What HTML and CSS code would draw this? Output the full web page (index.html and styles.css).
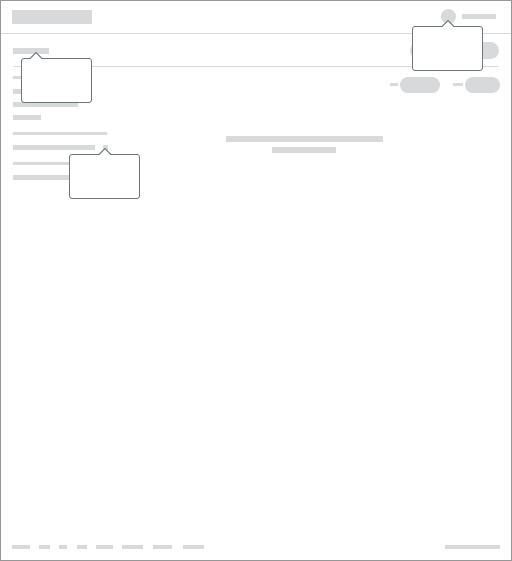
FILE: index.html
```html
<!DOCTYPE html>
<html lang="en">
<head>
<meta charset="utf-8">
<title>Popover placement</title>
<link rel="stylesheet" href="styles.css">
</head>
<body>
<div class="frame">
  <header class="header">
    <div class="bar logo"></div>
    <div class="user">
      <div class="avatar">
        <div class="popover popover-user"><svg class="caret" viewBox="0 0 14 8"><path d="M1 6.5L7 .7L13 6.5V8H1Z" fill="#fff"/><path d="M.5 6.5H1.2L7 .7L12.8 6.5H13.5"/></svg></div>
      </div>
      <div class="bar user-name"></div>
    </div>
  </header>
  <div class="toolbar">
    <div class="bar title">
      <div class="popover popover-title"><svg class="caret" viewBox="0 0 14 8"><path d="M1 6.5L7 .7L13 6.5V8H1Z" fill="#fff"/><path d="M.5 6.5H1.2L7 .7L12.8 6.5H13.5"/></svg></div>
    </div>
    <div class="actions"><div class="pill"></div><div class="pill"></div></div>
  </div>
  <main class="content">
    <aside class="details">
      <div class="bar label label-first"></div>
      <div class="bar value value-first"></div>
      <div class="bar value value-second"></div>
      <div class="bar value value-third"></div>
      <div class="bar label label-wide"></div>
      <div class="value-row">
        <div class="bar value value-long"></div>
        <div class="bar value help">
          <div class="popover popover-help"><svg class="caret" viewBox="0 0 14 8"><path d="M1 6.5L7 .7L13 6.5V8H1Z" fill="#fff"/><path d="M.5 6.5H1.2L7 .7L12.8 6.5H13.5"/></svg></div>
        </div>
      </div>
      <div class="bar label label-last"></div>
      <div class="bar value value-last"></div>
    </aside>
    <section class="results">
      <div class="filters">
        <div class="filter"><div class="bar filter-label"></div><div class="filter-pill"></div></div>
        <div class="filter"><div class="bar filter-label long"></div><div class="filter-pill short"></div></div>
      </div>
      <div class="message">
        <div class="bar message-line"></div>
        <div class="bar message-line second"></div>
      </div>
    </section>
  </main>
  <footer class="footer">
    <div class="links">
      <div class="bar link w18"></div>
      <div class="bar link w11"></div>
      <div class="bar link w8"></div>
      <div class="bar link w10"></div>
      <div class="bar link w17"></div>
      <div class="bar link w21"></div>
      <div class="bar link w19"></div>
      <div class="bar link w21"></div>
    </div>
    <div class="bar copyright"></div>
  </footer>
</div>
</body>
</html>
```
FILE: styles.css
```css
* { box-sizing: border-box; }
body { margin: 0; background: #fff; }

.frame {
  display: flex;
  flex-direction: column;
  width: 512px;
  height: 561px;
  border: 1px solid #979797;
  background: #fff;
}
.bar { background: #d8d9da; }

.header {
  display: flex;
  justify-content: space-between;
  height: 33px;
  padding: 9px 15px 0 11px;
  border-bottom: 1px solid #d8d9da;
}
.logo { width: 80px; height: 14px; }
.user { display: flex; gap: 6px; margin-top: -1px; }
.avatar {
  position: relative;
  width: 15px;
  height: 15px;
  border-radius: 50%;
  background: #d8d9da;
}
.user-name { width: 34px; height: 5px; margin-top: 5px; }

.toolbar {
  display: flex;
  justify-content: space-between;
  height: 33px;
  margin: 0 12px;
  padding-top: 8px;
  border-bottom: 1px solid #d8d9da;
}
.title { position: relative; width: 36px; height: 6px; margin-top: 6px; }
.actions { display: flex; gap: 9px; }
.pill { width: 40px; height: 17px; border-radius: 9px; background: #d8d9da; }

.content { display: flex; flex: 1; padding: 9px 11px 0 12px; }
.details { width: 94px; }
.label { height: 3px; }
.value { height: 5px; }
.label-first { width: 30px; }
.value-first { width: 50px; margin-top: 10px; }
.value-second { width: 65px; margin-top: 8px; }
.value-third { width: 28px; margin-top: 8px; }
.label-wide { width: 94px; margin-top: 12px; }
.value-row { display: flex; gap: 8px; margin-top: 10px; }
.value-row .value { flex-shrink: 0; }
.value-long { width: 82px; }
.help { position: relative; width: 5px; }
.label-last { width: 64px; margin-top: 12px; }
.value-last { width: 70px; margin-top: 10px; }

.results { flex: 1; padding-top: 1px; }
.filters { display: flex; justify-content: flex-end; gap: 13px; }
.filter { display: flex; gap: 2px; }
.filter-label { width: 8px; height: 3px; margin-top: 6px; }
.filter-label.long { width: 10px; }
.filter-pill { width: 40px; height: 16px; border-radius: 8px; background: #d8d9da; }
.filter-pill.short { width: 35px; }
.message {
  display: flex;
  flex-direction: column;
  align-items: center;
  gap: 5px;
  width: 157px;
  margin: 43px 0 0 119px;
}
.message-line { width: 157px; height: 6px; }
.message-line.second { width: 64px; margin-right: 1px; }

.footer {
  display: flex;
  justify-content: space-between;
  padding: 0 11px 11px;
}
.links { display: flex; gap: 9px; }
.link { height: 4px; }
.w8 { width: 8px; margin-right: 1px; }
.w10 { width: 10px; }
.w11 { width: 11px; }
.w17 { width: 17px; }
.w18 { width: 18px; }
.w19 { width: 19px; margin: 0 2px 0 1px; }
.w21 { width: 21px; }
.copyright { width: 55px; height: 4px; }

.popover {
  position: absolute;
  z-index: 2;
  width: 71px;
  height: 45px;
  border: 1px solid #6b7778;
  border-radius: 3px;
  background: #fff;
}
.popover-user { top: 17px; left: -29px; }
.popover-title { top: 10px; left: 8px; }
.popover-help { top: 9px; left: -34px; }
.caret {
  position: absolute;
  top: -7px;
  left: 28px;
  width: 14px;
  height: 8px;
  overflow: visible;
  fill: none;
  stroke: none;
}
.caret path:last-child { stroke: #6b7778; stroke-width: 1.2; }
.popover-title .caret { left: 7px; }
```
